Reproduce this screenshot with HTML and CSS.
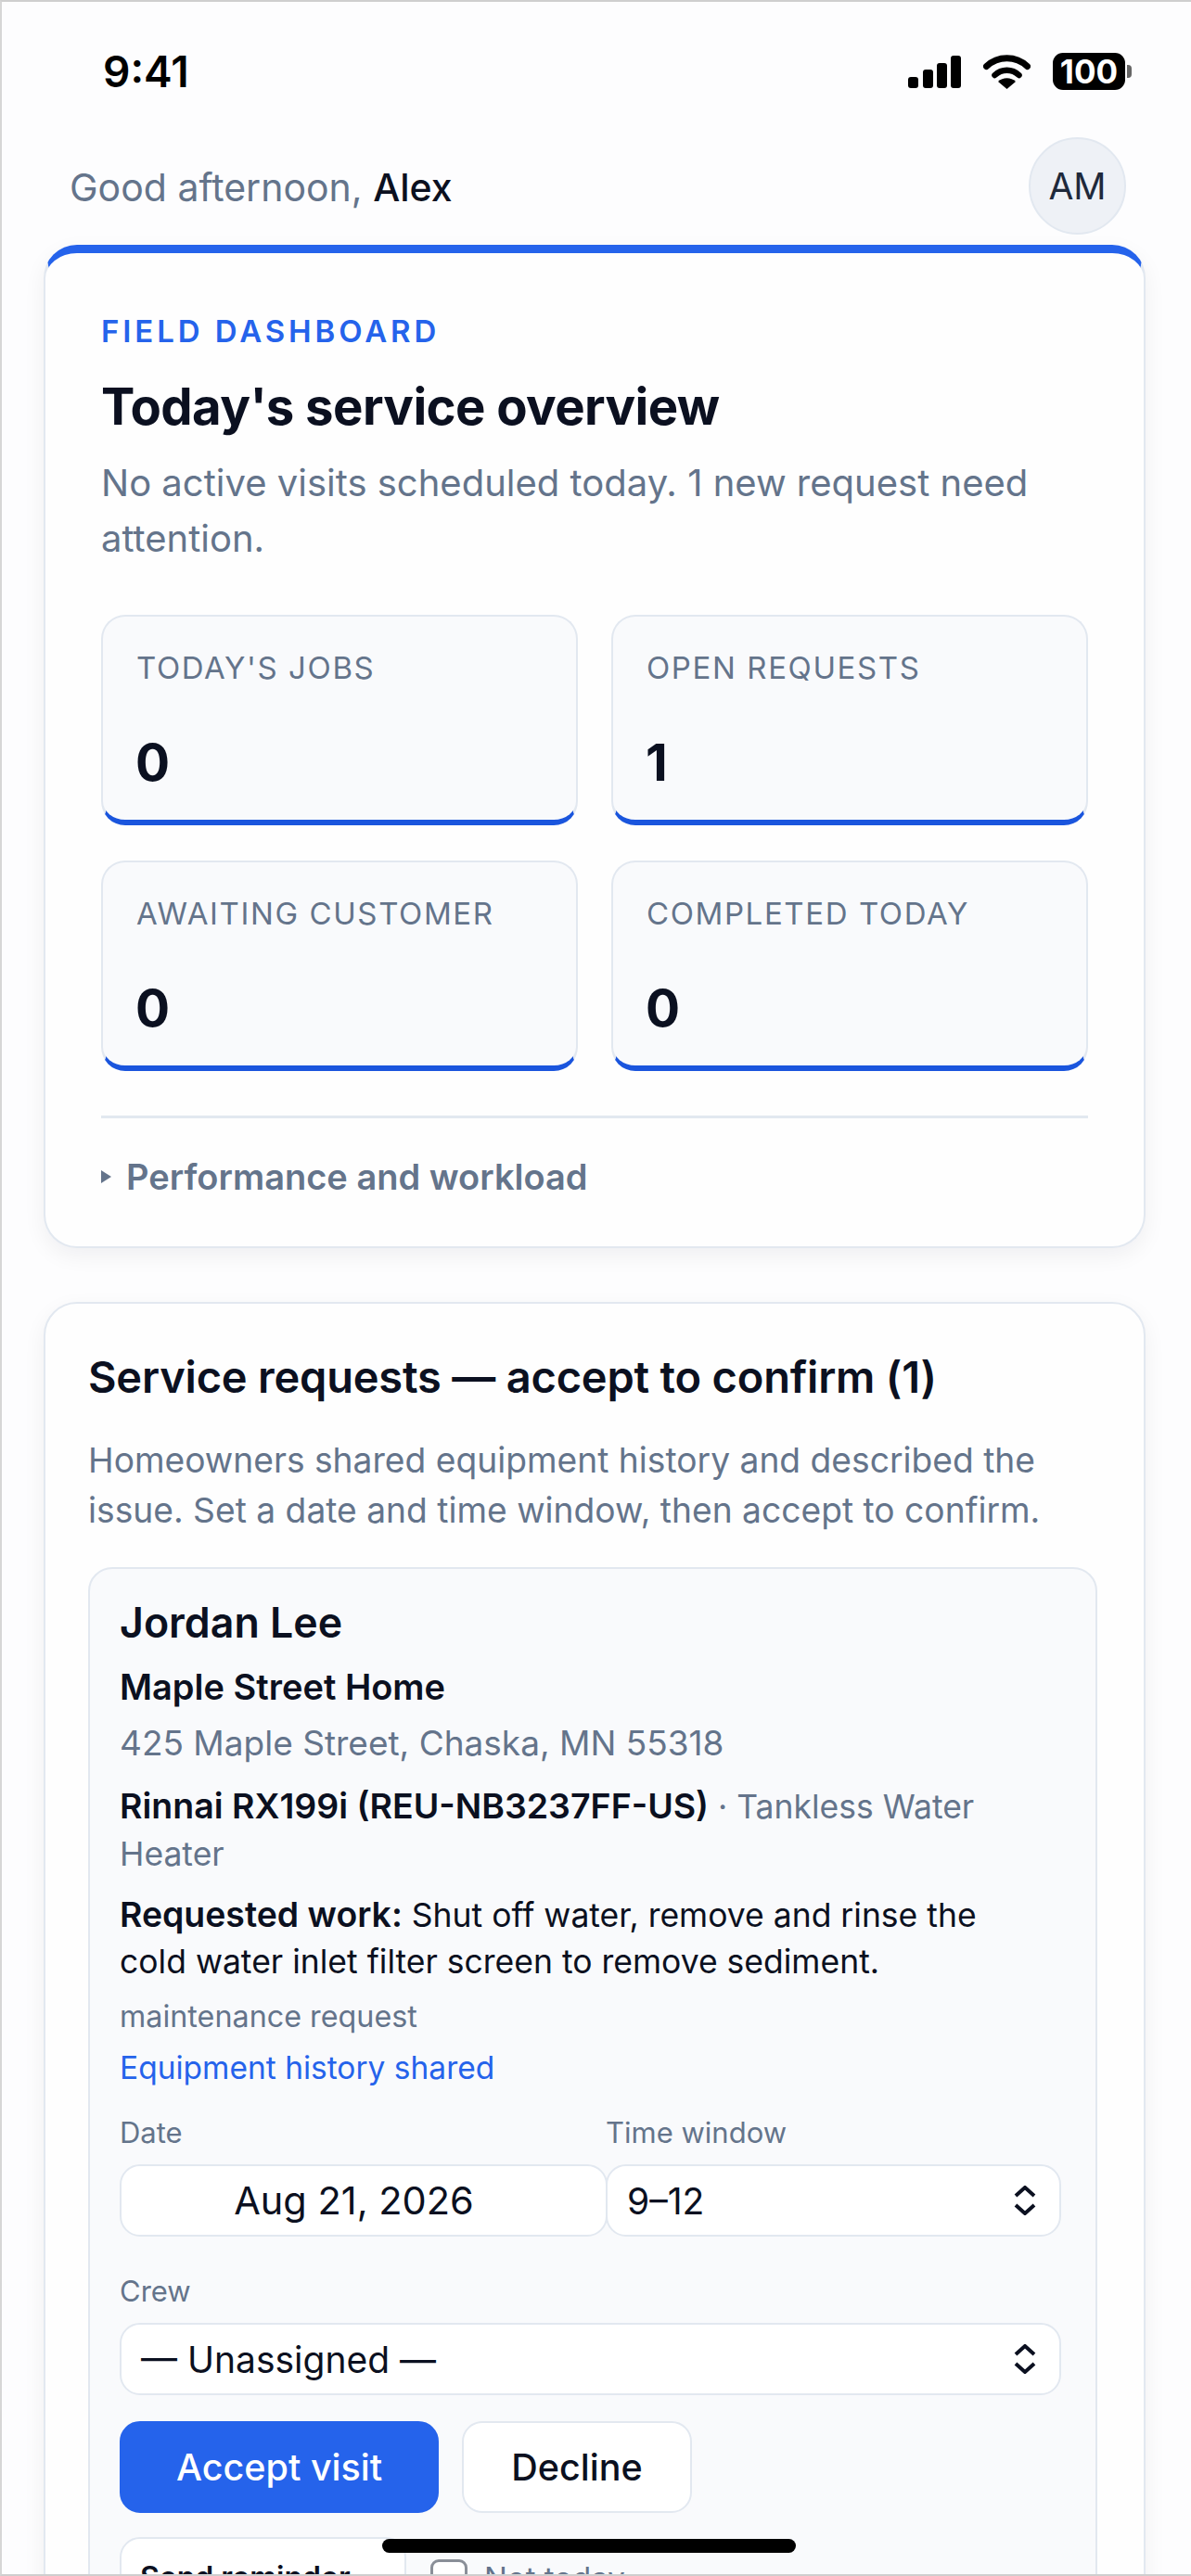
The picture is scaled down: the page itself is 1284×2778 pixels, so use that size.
FILE: index.html
```html
<!DOCTYPE html>
<html>
<head>
  <meta charset="utf-8">
  <link rel="stylesheet" href="styles.css">
</head>
<body>
  <div class="phone">
    <div class="status-bar">
      <span class="status-bar_time">9:41</span>
      <div class="status-bar_icons">
        <svg class="icon-signal" width="57" height="35" viewBox="0 0 57 35">
          <rect x="0" y="23" width="11" height="12" rx="3"/>
          <rect x="16" y="15" width="11" height="20" rx="3"/>
          <rect x="31" y="8" width="11" height="27" rx="3"/>
          <rect x="46" y="0" width="11" height="35" rx="3"/>
        </svg>
        <svg class="icon-wifi" width="51" height="38" viewBox="0 0 51 38">
          <path d="M3.5 13.5 A 32 32 0 0 1 47.5 13.5" fill="none" stroke="#000" stroke-width="7" stroke-linecap="round"/>
          <path d="M12.5 23 A 19 19 0 0 1 38.5 23" fill="none" stroke="#000" stroke-width="6.5" stroke-linecap="round"/>
          <path d="M16 30 A 14 14 0 0 1 35 30 L25.5 38 Z"/>
        </svg>
        <div class="battery">
          <span class="battery_level">100</span>
          <span class="battery_nub"></span>
        </div>
      </div>
    </div>

    <header class="top-bar">
      <p class="top-bar_greeting">Good afternoon, <strong>Alex</strong></p>
      <div class="avatar">AM</div>
    </header>

    <section class="card overview">
      <p class="overview_eyebrow">FIELD DASHBOARD</p>
      <h1 class="overview_title">Today's service overview</h1>
      <p class="overview_sub">No active visits scheduled today. 1 new request need attention.</p>
      <div class="stats">
        <div class="stat">
          <p class="stat_label">TODAY'S JOBS</p>
          <p class="stat_value">0</p>
        </div>
        <div class="stat">
          <p class="stat_label">OPEN REQUESTS</p>
          <p class="stat_value">1</p>
        </div>
        <div class="stat">
          <p class="stat_label">AWAITING CUSTOMER</p>
          <p class="stat_value">0</p>
        </div>
        <div class="stat">
          <p class="stat_label">COMPLETED TODAY</p>
          <p class="stat_value">0</p>
        </div>
      </div>
      <div class="disclosure">
        <span class="disclosure_arrow"></span>
        <span>Performance and workload</span>
      </div>
    </section>

    <section class="card requests">
      <h2 class="requests_title">Service requests — accept to confirm (1)</h2>
      <p class="requests_sub">Homeowners shared equipment history and described the issue. Set a date and time window, then accept to confirm.</p>

      <div class="request">
        <h3 class="request_name">Jordan Lee</h3>
        <p class="request_home">Maple Street Home</p>
        <p class="request_address">425 Maple Street, Chaska, MN 55318</p>
        <p class="request_equipment"><strong>Rinnai RX199i (REU-NB3237FF-US)</strong> <span>· Tankless Water Heater</span></p>
        <p class="request_work"><strong>Requested work:</strong> Shut off water, remove and rinse the cold water inlet filter screen to remove sediment.</p>
        <p class="request_type">maintenance request</p>
        <p class="request_link">Equipment history shared</p>

        <div class="fields">
          <div class="field">
            <p class="field_label">Date</p>
            <div class="field_box field_box-date">Aug 21, 2026</div>
          </div>
          <div class="field">
            <p class="field_label">Time window</p>
            <div class="field_box">
              <span>9–12</span>
              <svg class="chevrons" width="26" height="32" viewBox="0 0 26 32"><path d="M3 11 L13 2 L23 11 M3 21 L13 30 L23 21"/></svg>
            </div>
          </div>
          <div class="field field-wide">
            <p class="field_label">Crew</p>
            <div class="field_box">
              <span>— Unassigned —</span>
              <svg class="chevrons" width="26" height="32" viewBox="0 0 26 32"><path d="M3 11 L13 2 L23 11 M3 21 L13 30 L23 21"/></svg>
            </div>
          </div>
        </div>

        <div class="actions">
          <div class="btn btn-primary">Accept visit</div>
          <div class="btn">Decline</div>
        </div>

        <div class="actions-more">
          <div class="btn btn-small">Send reminder</div>
          <label class="check"><span class="check_box"></span>Not today</label>
        </div>
      </div>
    </section>

    <div class="home-indicator"></div>
  </div>
</body>
</html>
```

FILE: styles.css
```css
* {
  box-sizing: border-box;
}
html, body {
  margin: 0;
  padding: 0;
}
p, h1, h2, h3 {
  margin: 0;
  font-weight: inherit;
}
body {
  font-family: Inter, "Liberation Sans", sans-serif;
  color: #0b1020;
}
.phone {
  position: relative;
  width: 1284px;
  height: 2778px;
  overflow: hidden;
  background: #fdfdfe;
  border-top: 2px solid #cfcfcf;
  border-left: 2px solid #d6d6d6;
  border-bottom: 2px solid #cfcfcf;
}

/* status bar */
.status-bar {
  height: 118px;
  padding: 38px 0 0 109px;
  display: flex;
  justify-content: space-between;
  align-items: flex-start;
}
.status-bar_time {
  font-size: 46px;
  line-height: 74px;
  font-weight: 600;
  color: #000;
}
.status-bar_icons {
  display: flex;
  align-items: center;
  height: 74px;
  padding-right: 64px;
}
.icon-signal {
  margin-right: 24px;
}
.icon-wifi {
  margin-right: 24px;
}
.battery {
  display: flex;
  align-items: center;
}
.battery_level {
  width: 78px;
  height: 40px;
  border-radius: 11px;
  background: #000;
  color: #fff;
  font-size: 35px;
  font-weight: 700;
  line-height: 40px;
  text-align: center;
}
.battery_nub {
  width: 5px;
  height: 14px;
  margin-left: 2px;
  border-radius: 0 4px 4px 0;
  background: #666;
}

/* greeting row */
.top-bar {
  height: 144px;
  padding: 28px 70px 0 73px;
  display: flex;
  justify-content: space-between;
  align-items: flex-start;
}
.top-bar_greeting {
  margin-top: 24px;
  font-size: 41px;
  line-height: 60px;
  color: #64748b;
}
.top-bar_greeting strong {
  font-weight: 500;
  color: #0b1020;
}
.avatar {
  width: 105px;
  height: 105px;
  border-radius: 50%;
  background: #eef1f6;
  border: 2px solid #e2e8f0;
  font-size: 39px;
  line-height: 101px;
  text-align: center;
  color: #1e293b;
}

/* cards */
.card {
  width: 1188px;
  margin-left: 45px;
  background: #fefefe;
  border: 2px solid #e2e8f0;
  border-radius: 36px;
  box-shadow: 0 8px 24px rgba(15, 23, 42, 0.06);
}
.overview {
  height: 1082px;
  padding: 0 60px;
  border-top: 9px solid #2563eb;
}
.overview_eyebrow {
  margin-top: 62px;
  font-size: 33px;
  line-height: 44px;
  font-weight: 600;
  letter-spacing: 3.9px;
  color: #2563eb;
}
.overview_title {
  margin-top: 26px;
  font-size: 54.5px;
  line-height: 66px;
  font-weight: 700;
  letter-spacing: -0.6px;
  color: #0b1020;
}
.overview_sub {
  margin-top: 20px;
  font-size: 40px;
  line-height: 60px;
  color: #64748b;
}
.stats {
  margin-top: 52px;
  display: grid;
  grid-template-columns: 514px 514px;
  column-gap: 36px;
  row-gap: 38px;
}
.stat {
  height: 227px;
  padding: 33px 36px 0;
  background: #f9fafc;
  border: 2px solid #e2e8f0;
  border-bottom: 6px solid #1a55dd;
  border-radius: 26px;
}
.stat_label {
  font-size: 33px;
  line-height: 44px;
  letter-spacing: 1.6px;
  color: #64748b;
}
.stat_value {
  margin-left: -1px;
  margin-top: 45px;
  font-size: 55px;
  line-height: 70px;
  font-weight: 700;
  color: #0b1020;
}
.disclosure {
  margin-top: 48px;
  padding-top: 38px;
  border-top: 3px solid #e2e8f0;
  display: flex;
  align-items: center;
  font-size: 38px;
  line-height: 50px;
  font-weight: 600;
  color: #64748b;
}
.disclosure_arrow {
  width: 0;
  height: 0;
  margin-right: 16px;
  border-left: 11px solid #64748b;
  border-top: 7px solid transparent;
  border-bottom: 7px solid transparent;
}

/* service requests */
.requests {
  height: 1500px;
  margin-top: 58px;
  padding: 0 50px 0 46px;
}
.requests_title {
  margin-top: 49px;
  font-size: 47px;
  line-height: 60px;
  font-weight: 600;
  letter-spacing: -0.2px;
  color: #0b1020;
}
.requests_sub {
  margin-top: 33px;
  font-size: 37.2px;
  line-height: 54px;
  color: #64748b;
}
.request {
  margin-top: 34px;
  height: 1200px;
  padding: 28px 36px 0 32px;
  background: #f9fafc;
  border: 2px solid #e2e8f0;
  border-radius: 26px;
}
.request_name {
  font-size: 44.7px;
  line-height: 60px;
  font-weight: 600;
}
.request_home {
  margin-top: 14px;
  font-size: 38px;
  line-height: 50px;
  font-weight: 600;
}
.request_address {
  margin-top: 11px;
  font-size: 37px;
  line-height: 50px;
  color: #64748b;
}
.request_equipment {
  margin-top: 17px;
  font-size: 35.5px;
  line-height: 51px;
  color: #64748b;
}
.request_equipment strong {
  font-size: 37.5px;
  font-weight: 600;
  color: #0b1020;
}
.request_work {
  margin-top: 15px;
  padding-right: 50px;
  font-size: 35.5px;
  line-height: 50px;
}
.request_work strong {
  font-size: 37.4px;
  font-weight: 600;
}
.request_type {
  margin-top: 12px;
  font-size: 32.3px;
  line-height: 44px;
  color: #64748b;
}
.request_link {
  margin-top: 11px;
  font-size: 33.5px;
  line-height: 44px;
  color: #2563eb;
}
.fields {
  margin-top: 26px;
  display: grid;
  grid-template-columns: 524px 491px;
  row-gap: 37px;
}
.field-wide {
  grid-column: 1 / 3;
}
.field_label {
  font-size: 31px;
  line-height: 44px;
  color: #64748b;
}
.field_box {
  height: 78px;
  margin-top: 12px;
  padding: 0 24px 0 21px;
  display: flex;
  justify-content: space-between;
  align-items: center;
  background: #fff;
  border: 2px solid #e2e8f0;
  border-radius: 22px;
  font-size: 39px;
  color: #0b1020;
}
.field_box-date {
  justify-content: center;
  margin-right: -2px;
  padding-right: 42px;
  font-size: 41.5px;
}
.chevrons {
  fill: none;
  stroke: #0b1020;
  stroke-width: 4;
}
.actions {
  margin-top: 28px;
  display: flex;
  gap: 25px;
}
.btn {
  height: 99px;
  padding: 0 51px;
  display: flex;
  align-items: center;
  background: #fff;
  border: 2px solid #e2e8f0;
  border-radius: 22px;
  font-size: 39.5px;
  font-weight: 500;
  color: #0b1020;
}
.btn-primary {
  padding: 0 59px;
  background: #2563eb;
  border-color: #2563eb;
  color: #fff;
}
.actions-more {
  margin-top: 26px;
  display: flex;
  gap: 26px;
}
.btn-small {
  height: 86px;
  width: 309px;
  padding: 0 20px;
  font-size: 32px;
  font-weight: 600;
  white-space: nowrap;
}
.check {
  margin-top: 24px;
  display: flex;
  align-items: flex-start;
  height: 60px;
  font-size: 33px;
  line-height: 40px;
  color: #64748b;
}
.check_box {
  width: 40px;
  height: 40px;
  margin-right: 18px;
  background: #fff;
  border: 3px solid #8a8f98;
  border-radius: 9px;
}

.home-indicator {
  position: absolute;
  left: 410px;
  top: 2736px;
  width: 446px;
  height: 15px;
  border-radius: 8px;
  background: #000;
}
```
